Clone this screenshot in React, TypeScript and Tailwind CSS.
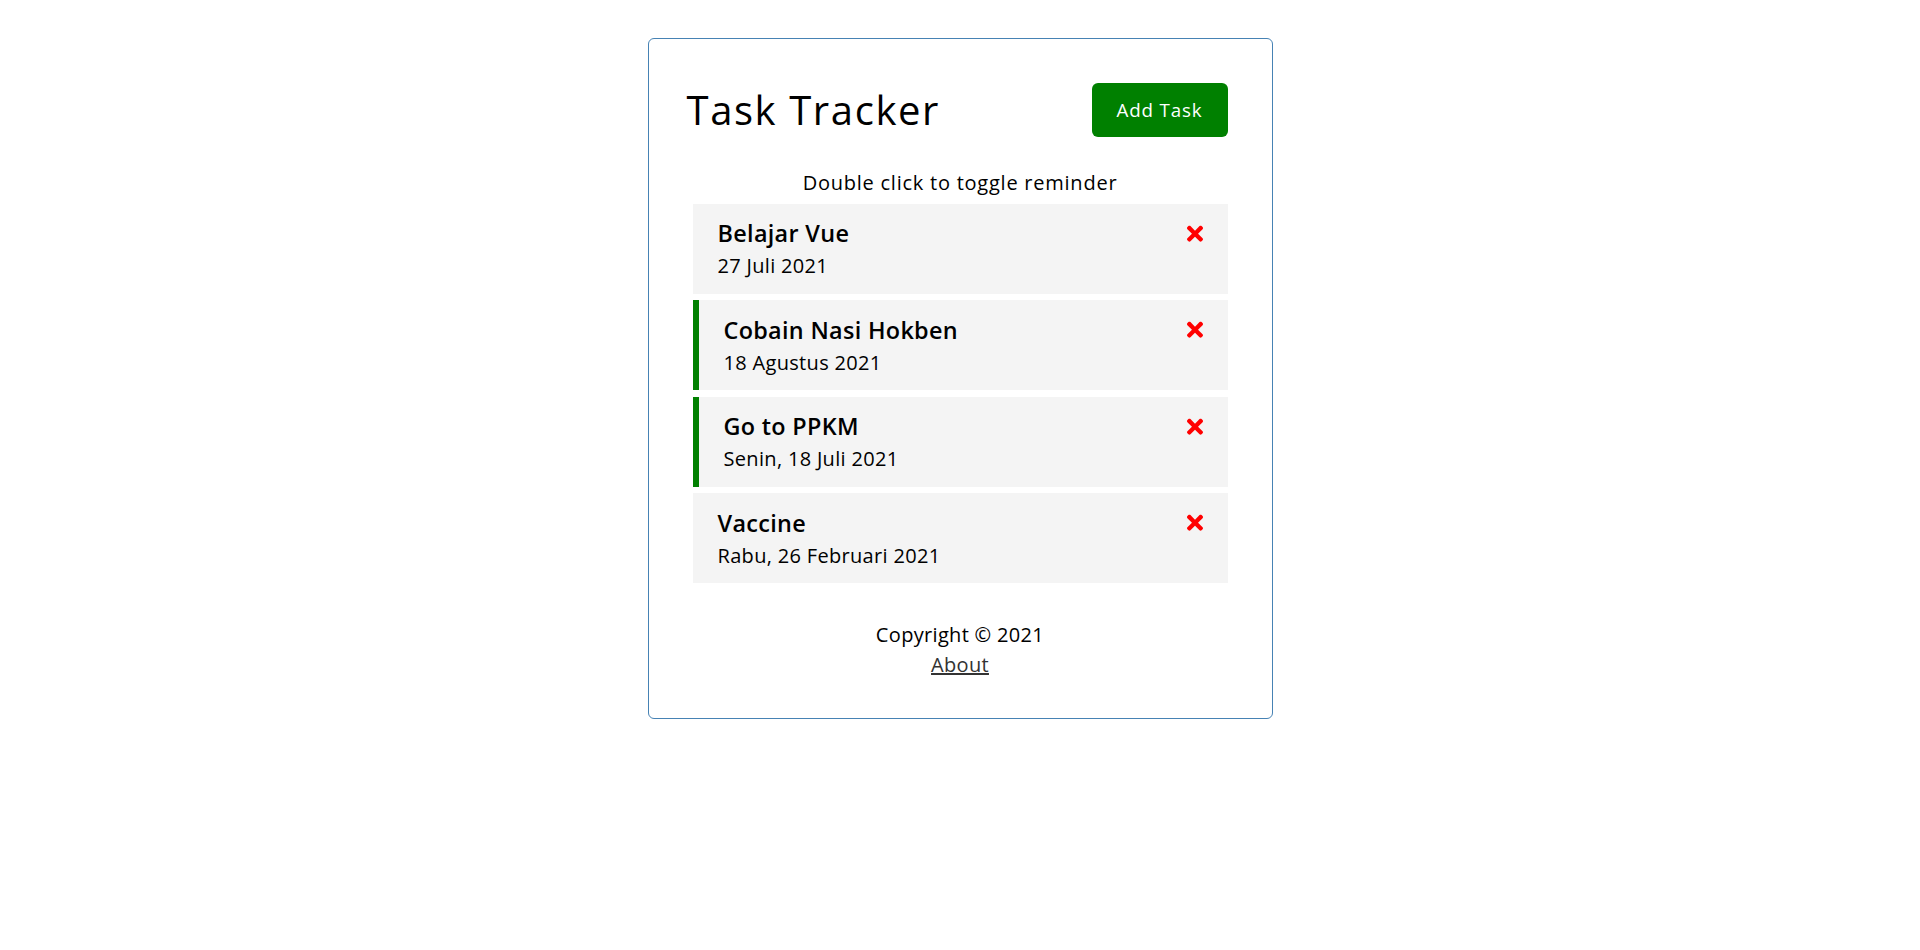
import { FaTimes } from 'react-icons/fa'

type Task = {
  id: number
  text: string
  day: string
  reminder: boolean
}

const tasks: Task[] = [
  { id: 1, text: 'Belajar Vue', day: '27 Juli 2021', reminder: false },
  { id: 2, text: 'Cobain Nasi Hokben', day: '18 Agustus 2021', reminder: true },
  { id: 3, text: 'Go to PPKM', day: 'Senin, 18 Juli 2021', reminder: true },
  { id: 4, text: 'Vaccine', day: 'Rabu, 26 Februari 2021', reminder: false },
]

function TaskItem({ task }: { task: Task }) {
  return (
    <div
      className={`mx-[6px] cursor-pointer bg-[#f4f4f4] px-[25px] py-[12.5px] ${
        task.reminder ? 'border-l-[6px] border-l-[#008000]' : ''
      }`}
    >
      <h3 className="flex items-center justify-between text-[23.4px] font-semibold leading-[35px] text-black">
        {task.text}
        <FaTimes className="h-[23.4px] w-[16px] text-[#ff0000]" />
      </h3>
      <p className="text-[20px] leading-[30px] text-black">{task.day}</p>
    </div>
  )
}

export default function App() {
  return (
    <div className="min-h-screen bg-white pt-[38px] font-['Open_Sans',sans-serif] tracking-[0.02em]">
      <div className="mx-auto w-[625px] rounded-[6px] border border-[#4682b4] px-[38px] py-[37.5px]">
        <header className="mb-[25px] flex items-center justify-between">
          <h1 className="text-[40px] font-normal leading-[60px] tracking-[0.04em] text-black">Task Tracker</h1>
          <button className="m-[6px] rounded-[6px] bg-[#008000] px-[25px] py-[12.5px] text-[18.75px] leading-[29px] tracking-[0.045em] text-white">
            Add Task
          </button>
        </header>

        <p className="text-center text-[20px] leading-[30px] tracking-[0.038em] text-black">
          Double click to toggle reminder
        </p>

        <div className="mt-[6px] flex flex-col gap-[6.5px]">
          {tasks.map(t => (
            <TaskItem key={t.id} task={t} />
          ))}
        </div>

        <footer className="mt-[37px] text-center text-[20px] leading-[30px] text-black">
          <p>Copyright &copy; 2021</p>
          <a href="#" className="text-[#333] underline">
            About
          </a>
        </footer>
      </div>
    </div>
  )
}
